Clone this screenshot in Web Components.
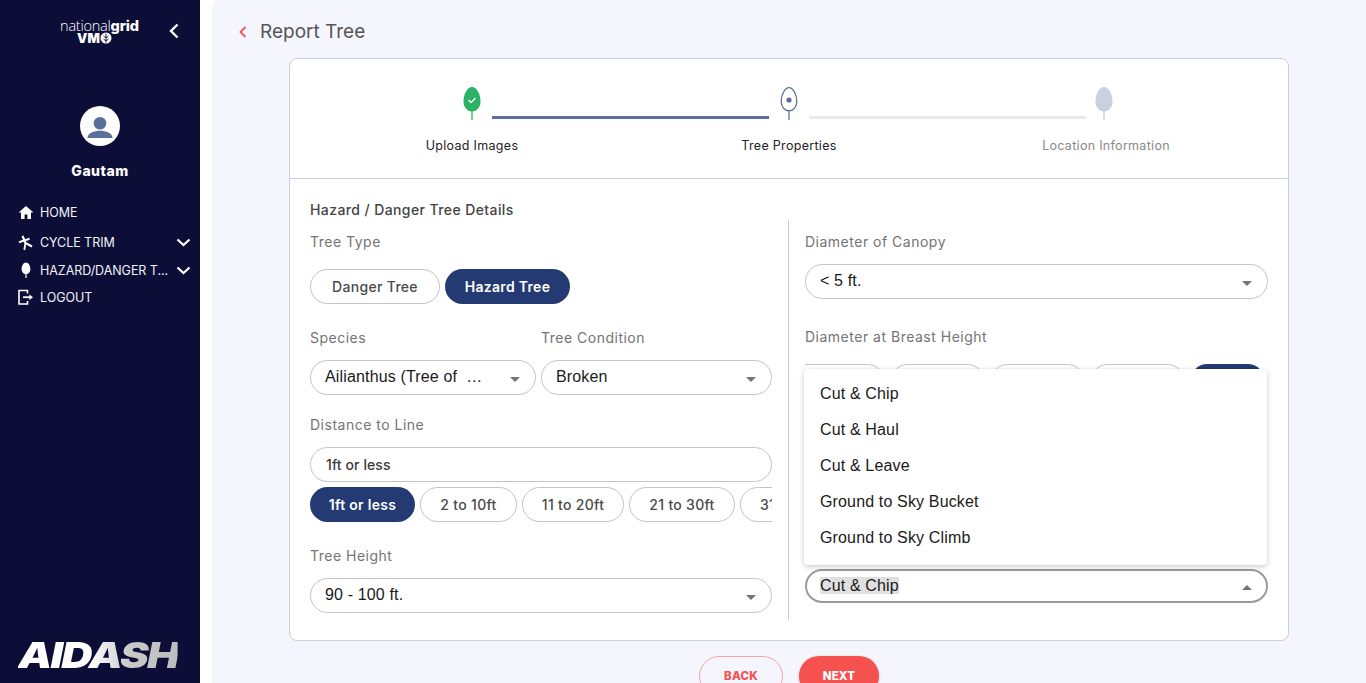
<!DOCTYPE html>
<html lang="en"><head><meta charset="utf-8"><title>Report Tree</title>
<style>
html,body{margin:0;height:683px;overflow:hidden;background:#fff}
body{font-family:Inter,"Liberation Sans",sans-serif}
</style></head><body>
<app-shell>
  <side-nav slot="nav" user="Gautam">
    <nav-item label="HOME" icon="home" h="30"></nav-item>
    <nav-item label="CYCLE TRIM" icon="trim" h="30" caret></nav-item>
    <nav-item label="HAZARD/DANGER T..." icon="tree" h="26" caret></nav-item>
    <nav-item label="LOGOUT" icon="logout" h="28"></nav-item>
  </side-nav>
  <report-page title-text="Report Tree">
    <step-bar></step-bar>
    <form-panel heading="Hazard / Danger Tree Details">
      <div slot="left">
        <form-field label="Tree Type" gap="18">
          <pill-row>
            <pill-btn w="130">Danger Tree</pill-btn>
            <pill-btn w="125" on>Hazard Tree</pill-btn>
          </pill-row>
        </form-field>
        <form-row>
          <form-field label="Species" gap="13" top="11" w="226"><pill-select w="226" value="Ailianthus (Tree of  …"></pill-select></form-field>
          <form-field label="Tree Condition" gap="13" top="11" w="231"><pill-select w="231" value="Broken"></pill-select></form-field>
        </form-row>
        <form-field label="Distance to Line" gap="13" top="7">
          <pill-input>1ft or less</pill-input>
          <pill-row scroll top="5">
            <pill-btn w="105" on>1ft or less</pill-btn>
            <pill-btn w="97">2 to 10ft</pill-btn>
            <pill-btn w="102">11 to 20ft</pill-btn>
            <pill-btn w="106">21 to 30ft</pill-btn>
            <pill-btn w="106">31 to 40ft</pill-btn>
          </pill-row>
        </form-field>
        <form-field label="Tree Height" gap="13" top="11"><pill-select value="90 - 100 ft."></pill-select></form-field>
      </div>
      <div slot="right">
        <form-field label="Diameter of Canopy" gap="13" top="-1"><pill-select value="&lt; 5 ft."></pill-select></form-field>
        <form-field label="Diameter at Breast Height" gap="18" top="15">
          <pill-row scroll offset="-25">
            <pill-btn w="105"></pill-btn><pill-btn w="95"></pill-btn><pill-btn w="95"></pill-btn><pill-btn w="95"></pill-btn><pill-btn w="75" on></pill-btn>
          </pill-row>
        </form-field>
        <pill-select top="170" open value="Cut &amp; Chip"></pill-select>
        <option-menu>
          <span>Cut &amp; Chip</span><span>Cut &amp; Haul</span><span>Cut &amp; Leave</span><span>Ground to Sky Bucket</span><span>Ground to Sky Climb</span>
        </option-menu>
      </div>
    </form-panel>
    <action-bar slot="actions"></action-bar>
  </report-page>
</app-shell>
<script>
const ICONS={
 home:'<path d="M8 2 0.6 8.6H3V15h3.6v-4.4h2.8V15H13V8.6h2.4z" fill="#fff"/>',
 trim:'<g fill="none" stroke="#fff" stroke-width="2.200"><path d="M4.500 2 7.500 9l6.500 3.500"/><path d="M1 8.200 11.500 4.800"/><path d="M7.500 9 6.300 16" stroke-width="1.800"/></g>',
 tree:'<path d="M8 .5C5.300.5 3.600 4 3.600 7.200c0 2.700 1.700 4.600 3.800 4.900V16h1.200v-3.900c2.100-.3 3.800-2.200 3.800-4.900C12.400 4 10.700.5 8 .5z" fill="#fff"/>',
 logout:'<path d="M9.500 4.500V1.500H1v13.500h8.500V12" fill="none" stroke="#fff" stroke-width="1.600"/><path d="M5 8.200h7" stroke="#fff" stroke-width="1.800"/><path d="M11.300 5.400 15 8.200l-3.700 2.800z" fill="#fff"/>'
};
function def(name,css,html,extra){
  customElements.define(name,class extends HTMLElement{
    constructor(){super();this.attachShadow({mode:'open'})}
    connectedCallback(){
      this.shadowRoot.innerHTML='<style>'+css(this)+'</style>'+html(this);
      if(extra)extra(this);
    }
  });
}
const a=(e,n,d='')=>e.getAttribute(n)??d;

def('app-shell',()=>`:host{display:flex;height:683px;overflow:hidden}
 .gap{width:12px;flex:none;background:#fff}`,
 ()=>`<slot name="nav"></slot><div class="gap"></div><slot></slot>`);

def('side-nav',()=>`:host{display:flex;flex-direction:column;width:200px;flex:none;height:683px;background:#0d0e38;color:#fff;box-sizing:border-box}
 .logo{display:flex;height:62px;box-sizing:border-box;padding-top:19px}
 .mark{width:156px;text-align:center;padding-left:43px;box-sizing:border-box;line-height:1}
 .ng{font-size:14.500px;font-weight:300;letter-spacing:-.25px;line-height:13px;white-space:nowrap;font-family:"Open Sans",sans-serif}
 .ng b{font-weight:800;font-family:Inter,sans-serif;letter-spacing:-.1px}
 .vmo{font-size:13px;font-weight:900;line-height:11px;padding-right:10px;letter-spacing:.2px;display:flex;justify-content:center;align-items:center;gap:0}
 .back{margin:4px 0 0 13px}
 .av{width:40px;height:40px;border-radius:50%;background:#fff;margin:44px auto 0;display:block}
 .name{text-align:center;font-weight:800;font-size:14px;line-height:18px;margin-top:16px;letter-spacing:.5px}
 nav{margin-top:17px;display:block}
 .brand{margin-top:auto;height:43px;padding:0 0 0 18px;box-sizing:border-box}
 .brand span{display:inline-block;font:italic 900 36px/30px Inter,sans-serif;letter-spacing:-1.500px;transform-origin:0 0;transform:scaleX(1.2);background:linear-gradient(90deg,#fff 0,#fff 45%,#c9c9c9 70%,#bdbdbd 100%);-webkit-background-clip:text;background-clip:text;color:transparent}`,
 e=>`<div class="logo"><div class="mark"><div class="ng">national<b>grid</b></div><div class="vmo">VM<svg width="12" height="12" viewBox="0 0 12 12"><circle cx="6" cy="6" r="5.500" fill="#fff"/><path d="M6 1.500v9M3.500 4 6 6l2.500-2M3.500 7 6 9l2.500-2" stroke="#0d0e38" fill="none" stroke-width=".9"/></svg></div></div>
 <svg class="back" width="10" height="16" viewBox="0 0 10 16"><path d="M8.500 1.500 2 8l6.500 6.500" fill="none" stroke="#fff" stroke-width="2.400"/></svg></div>
 <svg class="av" viewBox="0 0 40 40"><circle cx="20" cy="17.300" r="6.300" fill="#5a6f9c"/><path d="M7.500 32c0-4.800 6.700-7.200 12.500-7.200S32.500 27.200 32.500 32z" fill="#5a6f9c"/></svg>
 <div class="name">${a(e,'user')}</div><nav><slot></slot></nav>
 <div class="brand"><span>AIDASH</span></div>`);

def('nav-item',e=>`:host{display:flex;align-items:center;height:${a(e,'h')}px;padding-left:18px;font-size:12.500px;letter-spacing:-.05px;color:#f2f2f6;position:relative;white-space:nowrap;font-weight:400}
 .i{width:16px;height:16px;flex:none;margin-right:6px}
 .c{position:absolute;left:176px;top:50%;margin-top:-4px}`,
 e=>`<svg class="i" viewBox="0 0 16 16">${ICONS[a(e,'icon')]}</svg>${a(e,'label')}${e.hasAttribute('caret')?'<svg class="c" width="15" height="9" viewBox="0 0 15 9"><path d="M1.500 1.500 7.500 7l6-5.500" fill="none" stroke="#fff" stroke-width="2.200"/></svg>':''}`);

def('report-page',()=>`:host{display:block;flex:1;min-width:0;height:683px;background:#f4f5fd;overflow:hidden;border-top-left-radius:6px}
 header{height:58px;display:flex;align-items:center;padding:5px 0 0 27px;box-sizing:border-box;color:#555;font-size:19px}
 header svg{margin-right:13px}
 .card{width:1000px;height:583px;box-sizing:border-box;margin:0 auto;background:#fff;border:1px solid #c9d1e0;border-radius:8px;display:flex;flex-direction:column}`,
 e=>`<header><svg width="8" height="12" viewBox="0 0 8 12"><path d="M6.500 1 1.500 6l5 5" fill="none" stroke="#f4514f" stroke-width="1.800"/></svg>${a(e,'title-text')}</header>
 <div class="card"><slot></slot></div><slot name="actions"></slot>`);

def('step-bar',()=>`:host{display:grid;grid-template-columns:40px 277px 40px 277px 40px;grid-template-rows:62px auto;height:120px;box-sizing:border-box;border-bottom:1px solid #c9d1e0;padding-left:162px;flex:none;font-size:12.500px;color:#222}
 .ic{display:flex;justify-content:center;padding-top:28px;margin-left:-1px}
 .ic.e{margin-left:-4px}
 .ln{height:3px;align-self:start;margin-top:57px}
 .lb{grid-row:2;justify-self:center;white-space:nowrap;margin-top:17px;line-height:16px;letter-spacing:.3px}
 .a{grid-column:1}.b{grid-column:3}.c{grid-column:5;color:#8a8a8a}`,
 ()=>`
 <div class="ic"><svg width="18" height="33" viewBox="0 0 18 33"><path d="M9 0C4.500 0 .5 7 .5 14.500 .5 20 4 24.500 9 24.500s8.500-4.500 8.500-10C17.500 7 13.500 0 9 0z" fill="#2bb264"/><path d="M9 22v11" stroke="#2bb264" stroke-width="1.300"/><path d="M5.500 13l2.500 2.500 4.500-4.500" fill="none" stroke="#fff" stroke-width="1.300"/></svg></div>
 <div class="ln" style="background:#5a6f9c"></div>
 <div class="ic"><svg width="18" height="33" viewBox="0 0 18 33"><path d="M9 .7C5 .7 1.200 7.500 1.200 14.500 1.200 19.700 4.500 23.800 9 23.800s7.800-4.100 7.800-9.300C16.800 7.500 13 .7 9 .7z" fill="#fff" stroke="#5a6f9c" stroke-width="1.300"/><circle cx="9" cy="13" r="2.600" fill="#5a6f9c"/><path d="M9 23.500v9.500" stroke="#5a6f9c" stroke-width="1.300"/></svg></div>
 <div class="ln" style="background:#e9e9f1"></div>
 <div class="ic e"><svg width="18" height="33" viewBox="0 0 18 33"><path d="M9 0C4.500 0 .5 7 .5 14.500 .5 20 4 24.500 9 24.500s8.500-4.500 8.500-10C17.500 7 13.500 0 9 0z" fill="#c9d0de"/><path d="M9 22v11" stroke="#c9d0de" stroke-width="1.300"/></svg></div>
 <div class="lb a">Upload Images</div><div class="lb b">Tree Properties</div><div class="lb c">Location Information</div>`);

def('form-panel',()=>`:host{display:block;padding:0 20px;flex:1}
 h2{margin:0;font-size:14px;font-weight:500;color:#444;line-height:18px;padding-top:22px;height:40px;box-sizing:border-box;letter-spacing:.4px}
 .cols{display:grid;grid-template-columns:462px 1fr;height:401px}
 .r{border-left:1px solid #c9ccd4;margin:1px 0 0 16px;padding-left:16px;position:relative;width:463px;height:400px}
 .l{width:462px}`,
 e=>`<h2>${a(e,'heading')}</h2><div class="cols"><div class="l"><slot name="left"></slot></div><div class="r"><slot name="right"></slot></div></div>`);

def('form-row',()=>`:host{display:flex;gap:5px}`,()=>`<slot></slot>`);

def('form-field',e=>`:host{display:block;margin-top:${a(e,'top','0')}px;${e.hasAttribute('w')?'width:'+a(e,'w')+'px;flex:none':''}}
 label{display:block;font-size:14px;line-height:18px;color:#747474;padding-top:14px;margin-bottom:${a(e,'gap','11')}px;letter-spacing:.5px;white-space:nowrap}`,
 e=>`<label>${a(e,'label')}</label><slot></slot>`);

def('pill-row',e=>`:host{display:flex;gap:5px;height:35px;margin-top:${a(e,'top','0')}px;${e.hasAttribute('scroll')?'overflow:hidden;':''}}
 .o{display:flex;gap:5px;margin-left:${a(e,'offset','0')}px}`,
 ()=>`<div class="o"><slot></slot></div>`);

def('pill-btn',e=>{const on=e.hasAttribute('on');return `:host{display:flex;align-items:center;justify-content:center;height:35px;box-sizing:border-box;width:${a(e,'w')}px;flex:none;border-radius:18px;font-size:14px;letter-spacing:.3px;font-weight:${on?600:500};white-space:nowrap;${on?'background:#233a72;color:#fff':'background:#fff;border:1px solid #c4c4c4;color:#4a4a4a'}}`},
 ()=>`<slot></slot>`);

def('pill-select',e=>{const open=e.hasAttribute('open');return `:host{display:flex;align-items:center;height:${open?34:35}px;box-sizing:border-box;${e.hasAttribute('w')?'width:'+a(e,'w')+'px;':''}margin-top:${a(e,'top','0')}px;background:#fff;border:${open?'2px solid #9b9b9b':'1px solid #c4c4c4'};border-radius:18px;padding:0 ${open?'13px':'14px'};font:16px/17px "Liberation Sans",Arial,sans-serif;letter-spacing:.15px;color:#1a1a1a;position:relative;white-space:pre}
 .t{${open?'background:#e0e0e0;':''}margin-top:-2px}
 .c{position:absolute;right:${open?14:15}px;top:50%;margin-top:-1px;width:0;height:0;border-left:5px solid transparent;border-right:5px solid transparent;${open?'border-bottom:5px solid #757575':'border-top:5px solid #757575'}}`},
 e=>`<span class="t">${a(e,'value').replace(/&/g,'&amp;').replace(/</g,'&lt;')}</span><i class="c"></i>`);

def('pill-input',()=>`:host{display:flex;align-items:center;height:35px;box-sizing:border-box;background:#fff;border:1px solid #c4c4c4;border-radius:18px;padding:0 15px;font-size:14px;font-weight:500;color:#3a3a3a;letter-spacing:.1px}`,
 ()=>`<slot></slot>`);

def('option-menu',()=>`:host{position:absolute;left:15px;top:149px;width:463px;height:196px;box-sizing:border-box;padding:7px 0;background:#fff;border-radius:4px;box-shadow:0 2px 6px rgba(0,0,0,.18),0 0 2px rgba(0,0,0,.08);display:flex;flex-direction:column}
 ::slotted(span){display:flex;align-items:center;height:36px;padding-left:16px;font:16px "Liberation Sans",Arial,sans-serif;letter-spacing:.15px;color:#1a1a1a}`,
 ()=>`<slot></slot>`);

def('action-bar',()=>`:host{display:flex;justify-content:center;gap:16px;margin-top:15px}
 button{height:40px;border-radius:20px;box-sizing:border-box;font:800 11.500px/13px Inter,sans-serif;letter-spacing:.2px;display:flex;justify-content:center;padding:14px 0 0}
 .b{width:84px;background:#fff0;border:1px solid #f6a5a3;color:#f4514f;padding-top:13px}
 .n{width:80px;background:#f4514f;border:0;color:#fff;box-shadow:0 1px 3px rgba(0,0,0,.25)}`,
 ()=>`<button class="b">BACK</button><button class="n">NEXT</button>`);
</script>
</body></html>
